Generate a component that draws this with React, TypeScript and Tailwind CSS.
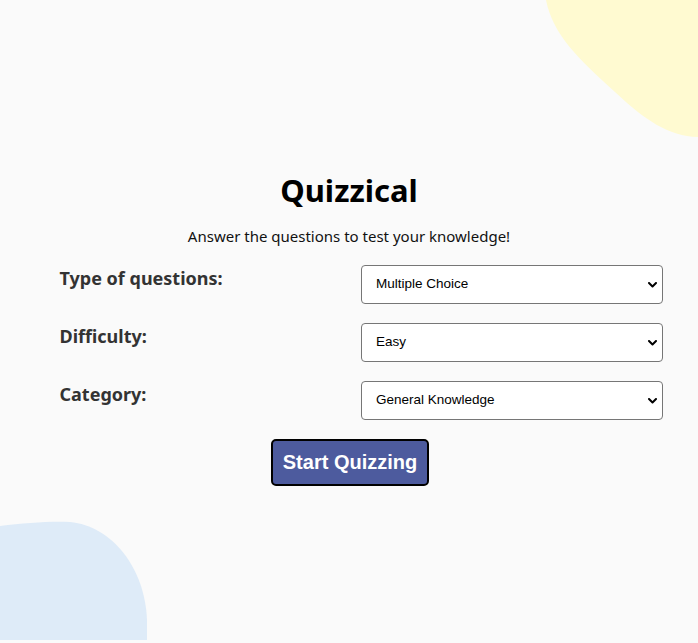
import React from 'react';

const FIELDS = [
  { label: 'Type of questions:', value: 'Multiple Choice', options: ['Multiple Choice', 'True / False'] },
  { label: 'Difficulty:', value: 'Easy', options: ['Easy', 'Medium', 'Hard'] },
  { label: 'Category:', value: 'General Knowledge', options: ['General Knowledge', 'Science', 'History'] },
];

function Chevron() {
  return (
    <svg className="pointer-events-none absolute right-[6px] top-1/2 -translate-y-1/2 w-[9px] h-[6px]" viewBox="0 0 9 6" fill="none">
      <path d="M1 1l3.5 3.5L8 1" stroke="#000" strokeWidth={2} strokeLinecap="round" strokeLinejoin="round" />
    </svg>
  );
}

export default function App() {
  return (
    <div className="relative w-[698px] h-[643px] overflow-hidden bg-[#fafafa]" style={{ fontFamily: '"Noto Sans", "Open Sans", sans-serif' }}>
      {/* decorative blobs */}
      <svg className="absolute left-0 top-0" width="698" height="643" viewBox="0 0 698 643">
        <path d="M546 0 C 553 35, 578 58, 615 92 C 645 120, 668 136, 698 137 L698 0 Z" fill="#fffad1" />
        <path d="M0 526 C 25 523, 50 521, 70 522 C 112 526, 145 568, 147 620 L147 640 L0 640 Z" fill="#deebf8" />
      </svg>

      <div className="relative flex flex-col items-center pt-[168px]">
        <h1 className="text-[31px] font-bold leading-[44px] text-black">Quizzical</h1>
        <p className="mt-[14px] text-[15px] leading-[20px] text-[#111]">Answer the questions to test your knowledge!</p>

        <div className="ml-[24px] mt-[19px] w-[603px] flex flex-col gap-[19px]">
          {FIELDS.map((f) => (
            <div key={f.label} className="grid grid-cols-2">
              <label className="text-[18px] font-bold leading-[26px] text-[#333]">{f.label}</label>
              <div className="relative h-[39px]">
                <select
                  defaultValue={f.value}
                  className="appearance-none w-full h-full rounded-[4px] border border-[#767676] bg-white pl-[14px] text-[13.5px] text-black"
                  style={{ fontFamily: '"Liberation Sans", Arial, sans-serif' }}
                >
                  {f.options.map((o) => (
                    <option key={o}>{o}</option>
                  ))}
                </select>
                <Chevron />
              </div>
            </div>
          ))}
        </div>

        <button
          className="ml-[2px] mt-[19px] w-[158px] h-[47px] rounded-[5px] border-2 border-black bg-[#4d5b9e] pb-[2px] text-[20px] font-bold text-white"
          style={{ fontFamily: '"Liberation Sans", Arial, sans-serif' }}
        >
          Start Quizzing
        </button>
      </div>
    </div>
  );
}
